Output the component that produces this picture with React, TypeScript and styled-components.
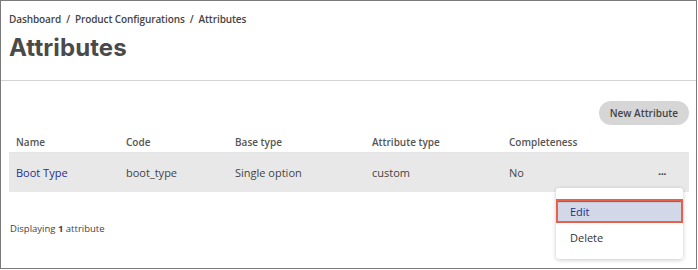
import React from "react";
import styled, { createGlobalStyle } from "styled-components";

const Global = createGlobalStyle`
  html, body { margin: 0; padding: 0; background: #ffffff; }
  body { font-family: "Open Sans", "Liberation Sans", sans-serif; color: #444; }
  * { box-sizing: border-box; }
`;

const Frame = styled.div`
  width: 697px;
  height: 269px;
  border: 1px solid #7a7a7a;
  background: #fff;
  display: flex;
  flex-direction: column;
`;

const Header = styled.header`
  padding: 11px 8px 0 8px;
  height: 80px;
  border-bottom: 1px solid #d4d4d4;
`;

const Breadcrumb = styled.nav`
  font-size: 10px;
  font-weight: 600;
  color: #444;
  line-height: 14px;
  display: flex;
  gap: 5px;
  letter-spacing: -0.1px;
`;

const Title = styled.h1`
  margin: 7px 0 0 0;
  font-family: "Inter", "Liberation Sans", sans-serif;
  font-weight: 700;
  font-size: 24px;
  letter-spacing: 0.1px;
  line-height: 30px;
  color: #4a4a4a;
`;

const Body = styled.main`
  padding: 20px 7px 0 8px;
  display: flex;
  flex-direction: column;
  flex: 1;
`;

const Toolbar = styled.div`
  display: flex;
  justify-content: flex-end;
`;

const PillButton = styled.button`
  height: 24px;
  padding: 0 11px;
  border: none;
  border-radius: 12px;
  background: #d6d6d6;
  color: #444;
  font-family: "Open Sans", "Liberation Sans", sans-serif;
  font-size: 10px;
  font-weight: 600;
`;

const cols = "117px 109px 137px 137px 1fr 50px";

const HeadRow = styled.div`
  display: grid;
  grid-template-columns: ${cols};
  height: 21px;
  margin-top: 7px;
  align-items: center;
  border-bottom: 1px solid #e4e4e4;
  font-size: 10px;
  font-weight: 600;
  color: #555;
`;

const DataRow = styled.div`
  position: relative;
  display: grid;
  grid-template-columns: ${cols};
  height: 39px;
  align-items: center;
  background: #e8e8e8;
  font-size: 11px;
  color: #444;
`;

const Cell = styled.div<{ $first?: boolean }>`
  padding-left: ${(p) => (p.$first ? "7px" : "0")};
  white-space: nowrap;
`;

const NameLink = styled.a`
  color: #1f2f8c;
  text-decoration: none;
`;

const Dots = styled.div`
  font-size: 11px;
  font-weight: 700;
  color: #444;
  letter-spacing: -0.5px;
  padding-left: 19px;
  margin-top: -4px;
`;

const Menu = styled.div`
  position: absolute;
  top: 35px;
  right: 6px;
  width: 127px;
  height: 71px;
  background: #fff;
  border-radius: 3px;
  box-shadow: 0 1px 4px rgba(0, 0, 0, 0.22);
  padding-top: 11px;
  z-index: 2;
`;

const MenuItem = styled.div<{ $active?: boolean }>`
  height: ${(p) => (p.$active ? "24px" : "24px")};
  display: flex;
  align-items: center;
  font-size: 11px;
  color: ${(p) => (p.$active ? "#1f2f8c" : "#333")};
  background: ${(p) => (p.$active ? "#d2d8e8" : "transparent")};
  border: ${(p) => (p.$active ? "2px solid #e8604c" : "none")};
  box-shadow: ${(p) => (p.$active ? "inset 0 2px 1px -1px #666" : "none")};
  margin-bottom: ${(p) => (p.$active ? "2px" : "0")};
  padding-left: ${(p) => (p.$active ? "12px" : "14px")};
`;

const Footer = styled.div`
  margin-top: 30px;
  font-size: 9.5px;
  color: #444;
  padding-left: 1px;
  b { font-weight: 700; }
`;

export default function App() {
  return (
    <>
      <Global />
      <Frame>
        <Header>
          <Breadcrumb>
            <span>Dashboard</span>
            <span>/</span>
            <span>Product Configurations</span>
            <span>/</span>
            <span>Attributes</span>
          </Breadcrumb>
          <Title>Attributes</Title>
        </Header>
        <Body>
          <Toolbar>
            <PillButton>New Attribute</PillButton>
          </Toolbar>
          <HeadRow>
            <Cell $first>Name</Cell>
            <Cell>Code</Cell>
            <Cell>Base type</Cell>
            <Cell>Attribute type</Cell>
            <Cell>Completeness</Cell>
            <Cell />
          </HeadRow>
          <DataRow>
            <Cell $first>
              <NameLink href="#">Boot Type</NameLink>
            </Cell>
            <Cell>boot_type</Cell>
            <Cell>Single option</Cell>
            <Cell>custom</Cell>
            <Cell>No</Cell>
            <Dots>...</Dots>
            <Menu>
              <MenuItem $active>Edit</MenuItem>
              <MenuItem>Delete</MenuItem>
            </Menu>
          </DataRow>
          <Footer>
            Displaying <b>1</b> attribute
          </Footer>
        </Body>
      </Frame>
    </>
  );
}
